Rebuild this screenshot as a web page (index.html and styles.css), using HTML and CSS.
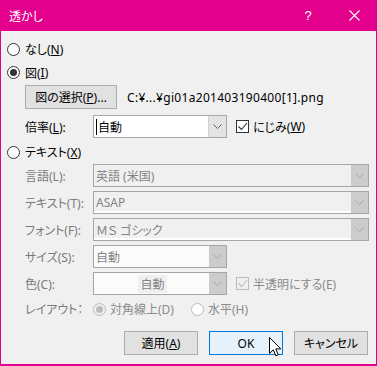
FILE: index.html
```html
<!DOCTYPE html>
<html lang="ja">
<head>
  <meta charset="UTF-8">
  <title>透かし</title>
  <link rel="stylesheet" href="styles.css">
</head>
<body>

  <div class="window">
    <div class="titlebar">
      <span class="title">透かし</span>
      <span class="caption-btn help">?</span>
      <span class="caption-btn close">
        <svg width="11" height="11" viewBox="0 0 11 11"><path d="M0.5 0.5L10.5 10.5M10.5 0.5L0.5 10.5" stroke="#fff" stroke-width="1.1" fill="none"/></svg>
      </span>
    </div>

    <div class="content">
      <label class="option first"><span class="radio"></span>なし(<u>N</u>)</label>
      <label class="option"><span class="radio on"></span>図(<u>I</u>)</label>

      <div class="pic-row">
        <button class="btn pick">図の選択(<u>P</u>)...</button>
        <span class="path">C:¥...¥gi01a201403190400[1].png</span>
      </div>

      <div class="field scale-row">
        <span class="label">倍率(<u>L</u>):</span>
        <div class="combo short">
          <span class="value"><i class="caret"></i>自動</span>
          <span class="drop"><svg width="9" height="5" viewBox="0 0 9 5"><path d="M0.5 0.5L4.5 4.5L8.5 0.5" stroke="#606060" fill="none"/></svg></span>
        </div>
        <label class="check"><span class="box"><svg width="11" height="11" viewBox="0 0 11 11"><path d="M1.5 5.5L4.5 8.5L10 2" stroke="#333" stroke-width="1.1" fill="none"/></svg></span>にじみ(<u>W</u>)</label>
      </div>

      <label class="option text-opt"><span class="radio"></span>テキスト(<u>X</u>)</label>

      <!-- disabled text watermark fields -->
      <div class="field off">
        <span class="label">言語(L):</span>
        <div class="combo long">
          <span class="value">英語 (米国)</span>
          <span class="drop"><svg width="9" height="5" viewBox="0 0 9 5"><path d="M0.5 0.5L4.5 4.5L8.5 0.5" stroke="#a8a8a8" fill="none"/></svg></span>
        </div>
      </div>

      <div class="field off">
        <span class="label">テキスト(T):</span>
        <div class="combo long edit">
          <span class="value">ASAP</span>
          <span class="drop"><svg width="9" height="5" viewBox="0 0 9 5"><path d="M0.5 0.5L4.5 4.5L8.5 0.5" stroke="#a8a8a8" fill="none"/></svg></span>
        </div>
      </div>

      <div class="field off">
        <span class="label">フォント(F):</span>
        <div class="combo long edit">
          <span class="value">ＭＳ ゴシック</span>
          <span class="drop"><svg width="9" height="5" viewBox="0 0 9 5"><path d="M0.5 0.5L4.5 4.5L8.5 0.5" stroke="#a8a8a8" fill="none"/></svg></span>
        </div>
      </div>

      <div class="field off">
        <span class="label">サイズ(S):</span>
        <div class="combo short white">
          <span class="value">自動</span>
          <span class="drop"><svg width="9" height="5" viewBox="0 0 9 5"><path d="M0.5 0.5L4.5 4.5L8.5 0.5" stroke="#a8a8a8" fill="none"/></svg></span>
        </div>
      </div>

      <div class="field off">
        <span class="label">色(C):</span>
        <div class="combo short white">
          <span class="value center"><span class="swatch">自動</span></span>
          <span class="drop"><svg width="9" height="5" viewBox="0 0 9 5"><path d="M0.5 0.5L4.5 4.5L8.5 0.5" stroke="#a8a8a8" fill="none"/></svg></span>
        </div>
        <label class="check off"><span class="box"><svg width="11" height="11" viewBox="0 0 11 11"><path d="M1.5 5.5L4.5 8.5L10 2" stroke="#bcbcbc" stroke-width="1.1" fill="none"/></svg></span>半透明にする(E)</label>
      </div>

      <div class="field off layout-row">
        <span class="label">レイアウト：</span>
        <label class="option inline diag"><span class="radio on"></span>対角線上(D)</label>
        <label class="option inline"><span class="radio"></span>水平(H)</label>
      </div>

      <div class="actions">
        <button class="btn">適用(<u>A</u>)</button>
        <button class="btn default">OK</button>
        <button class="btn">キャンセル</button>
      </div>
    </div>

    <!-- mouse pointer over OK -->
    <svg class="pointer" width="13" height="20" viewBox="0 0 13 20">
      <path d="M0.5 0.5L0.5 16.5L4.3 12.8L6.8 18.8L9.2 17.8L6.8 11.9L11.8 11.9Z" fill="#fff" stroke="#000" stroke-width="1" stroke-linejoin="miter"/>
    </svg>
  </div>

</body>
</html>
```

FILE: styles.css
```css
body {
  margin: 0;
  background-color: #ffffff;
  font-family: "Noto Sans", "Noto Sans CJK JP", sans-serif;
  font-size: 12px;
  font-feature-settings: "palt";
  color: #000000;
}

.window {
  position: relative;
  width: 377px;
  height: 366px;
  box-sizing: border-box;
  border: 1px solid #e3008c;
  border-top: none;
  border-bottom-width: 2px;
  background-color: #f0f0f0;
}

.titlebar {
  display: flex;
  align-items: center;
  height: 31px;
  margin: 0 -1px;
  padding-left: 9px;
  background-color: #e3008c;
  color: #ffffff;
}

.title {
  flex: 1;
  font-size: 12px;
}

.caption-btn {
  width: 46px;
  height: 31px;
  display: flex;
  align-items: center;
  justify-content: center;
}

.help {
  font-family: "Liberation Sans", sans-serif;
  font-size: 13px;
}

.close svg {
  display: block;
}

.content {
  padding-left: 6px;
  padding-right: 7px;
}

u {
  text-decoration: underline;
  text-underline-offset: 1px;
}

/* radios and checkboxes */
.option {
  display: flex;
  align-items: center;
  height: 23px;
  white-space: nowrap;
}

.option.first {
  margin-top: 6px;
  height: 24px;
}

.radio {
  position: relative;
  width: 13px;
  height: 13px;
  box-sizing: border-box;
  border: 1px solid #333333;
  border-radius: 50%;
  background-color: #ffffff;
  margin-right: 5px;
  flex: none;
}

.radio.on::after {
  content: "";
  position: absolute;
  left: 2px;
  top: 2px;
  width: 7px;
  height: 7px;
  border-radius: 50%;
  background-color: #333333;
}

.text-opt {
  height: 24px;
  padding-top: 2px;
}

.check {
  display: flex;
  align-items: center;
  margin-left: 9px;
  white-space: nowrap;
}

.box {
  width: 13px;
  height: 13px;
  box-sizing: border-box;
  border: 1px solid #333333;
  background-color: #ffffff;
  margin-right: 4px;
  display: flex;
  align-items: center;
  justify-content: center;
}

.box svg {
  display: block;
}

.check.off {
  color: #8a8a8a;
}

.check.off .box {
  border-color: #bcbcbc;
  background-color: #f0f0f0;
}

/* picture row */
.pic-row {
  display: flex;
  align-items: center;
  margin-top: 1px;
  padding-left: 18px;
  height: 24px;
}

.path {
  margin-left: 10px;
  white-space: nowrap;
  letter-spacing: 0.3px;
}

.btn {
  font-family: inherit;
  font-size: 12px;
  font-feature-settings: "palt";
  height: 24px;
  width: 74px;
  box-sizing: border-box;
  border: 1px solid #adadad;
  background-color: #e1e1e1;
  color: #000000;
  padding: 0;
  white-space: nowrap;
}

.btn.pick {
  width: 92px;
}

.btn.default {
  border-color: #0078d7;
  background-color: #e5f1fb;
}

/* label + combo rows */
.field {
  display: flex;
  align-items: center;
  height: 23px;
  padding-left: 18px;
  margin-top: 4px;
}

.scale-row {
  margin-top: 6px;
}

.text-opt + .field {
  margin-top: 0;
}

.label {
  width: 68px;
  flex: none;
  white-space: nowrap;
}

.field.off .label {
  color: #7a7a7a;
}

.combo {
  display: flex;
  height: 23px;
  box-sizing: border-box;
  border: 1px solid #a6a6a6;
  background-color: #ffffff;
}

.combo.short {
  width: 134px;
}

.combo.long {
  width: 277px;
}

.value {
  flex: 1;
  display: flex;
  align-items: center;
  padding-left: 2px;
  white-space: nowrap;
}

.value.center {
  justify-content: center;
}

.caret {
  width: 1px;
  height: 16px;
  background-color: #000000;
  margin-right: 1px;
}

.drop {
  width: 17px;
  display: flex;
  align-items: center;
  justify-content: center;
  background-color: #e3e3e3;
  border-left: 1px solid #d0d0d0;
}

.field.off .combo {
  background-color: #f0f0f0;
  color: #838383;
}

.field.off .combo.edit .value {
  box-shadow: inset 0 -2px 0 #ffffff;
}

.field.off .combo.white {
  background-color: #fbfbfb;
}

.field.off .drop {
  background-color: #cccccc;
  border-left: none;
}

.swatch {
  background-color: #f0f0f0;
  padding: 0 2px;
  color: #838383;
}

/* layout radios */
.layout-row {
  height: 28px;
  margin-top: 0;
}

.option.inline {
  height: 28px;
  color: #8a8a8a;
}

.option.inline .radio {
  border-color: #bcbcbc;
  margin-right: 4px;
}

.option.inline .radio.on {
  background-color: #f0f0f0;
}

.option.inline .radio.on::after {
  background-color: #bcbcbc;
}

.diag {
  margin-right: 17px;
}

/* dialog buttons */
.actions {
  display: flex;
  justify-content: flex-end;
  gap: 11px;
  margin-top: 8px;
  padding-right: 1px;
}

.pointer {
  position: absolute;
  left: 268px;
  top: 337px;
}
```
